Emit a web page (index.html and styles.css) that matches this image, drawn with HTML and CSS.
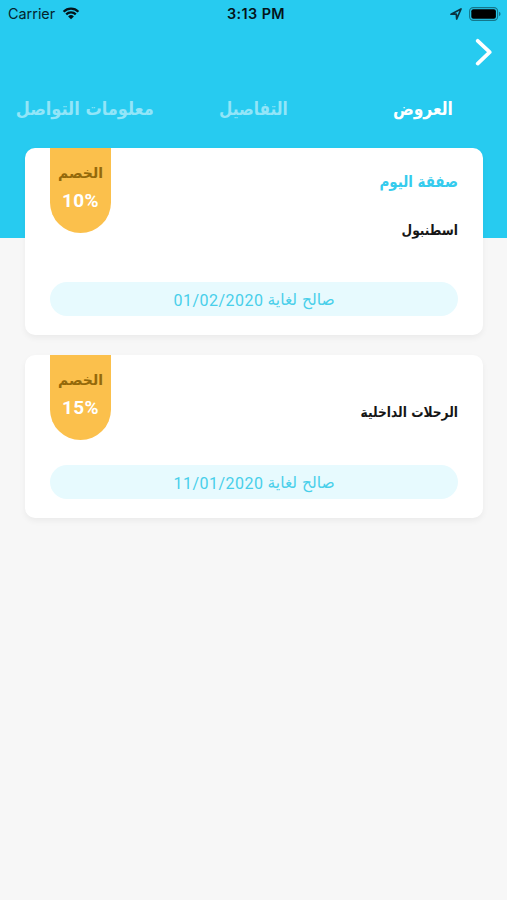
FILE: index.html
```html
<!DOCTYPE html>
<html lang="ar">
<head>
    <meta charset="UTF-8">
    <meta name="viewport" content="width=device-width, initial-scale=1.0">
    <title>العروض</title>
    <link rel="stylesheet" href="styles.css">
</head>
<body>
    <!-- Header -->
    <header class="header">
        <div class="status-bar">
            <div class="carrier">
                <span>Carrier</span>
                <svg width="18" height="13" viewBox="0 0 18 13">
                    <path d="M1.6 4.7a10.6 10.6 0 0 1 14.8 0M4.2 7.4a6.9 6.9 0 0 1 9.6 0" fill="none" stroke="#04141a" stroke-width="2.3"/>
                    <path d="M9 12.3L6.1 9.4a4.1 4.1 0 0 1 5.8 0z" fill="#04141a"/>
                </svg>
            </div>
            <div class="time">3:13 PM</div>
            <div class="indicators">
                <svg width="12" height="12" viewBox="0 0 12 12">
                    <path d="M1 6.2L11 1 6.7 11 6.3 6.2z" fill="none" stroke="#0b3340" stroke-width="1.7" stroke-linejoin="round"/>
                </svg>
                <svg width="32" height="14" viewBox="0 0 32 14">
                    <rect x=".6" y=".6" width="28" height="12.8" rx="3.6" fill="none" stroke="#14768b" stroke-width="1.1"/>
                    <rect x="2.3" y="2.3" width="24.6" height="9.4" rx="2" fill="#000"/>
                    <path d="M30 4.8q1.6.6 1.6 2.2T30 9.2z" fill="#14768b"/>
                </svg>
            </div>
        </div>
        <div class="nav">
            <svg width="18" height="28" viewBox="0 0 18 28">
                <path d="M2.7 2.8L14.7 14.2 2.7 25.6" fill="none" stroke="#fff" stroke-width="3.7" stroke-linecap="round" stroke-linejoin="round"/>
            </svg>
        </div>
        <div class="tabs" dir="rtl">
            <div class="tab active"><span class="tab-offers">العروض</span></div>
            <div class="tab"><span class="tab-details">التفاصيل</span></div>
            <div class="tab"><span class="tab-contact">معلومات التواصل</span></div>
        </div>
    </header>

    <!-- Offers -->
    <main class="offers" dir="rtl">
        <div class="card">
            <div class="card-top">
                <div class="card-text">
                    <h2>صفقة اليوم</h2>
                    <p class="city">اسطنبول</p>
                </div>
                <div class="badge">
                    <span class="badge-label">الخصم</span>
                    <span class="badge-value" dir="ltr">10%</span>
                </div>
            </div>
            <div class="valid"><span>صالح لغاية</span><bdi class="date">01/02/2020</bdi></div>
        </div>
        <div class="card">
            <div class="card-top short">
                <div class="card-text">
                    <p class="trips">الرحلات الداخلية</p>
                </div>
                <div class="badge">
                    <span class="badge-label">الخصم</span>
                    <span class="badge-value" dir="ltr">15%</span>
                </div>
            </div>
            <div class="valid"><span>صالح لغاية</span><bdi class="date">11/01/2020</bdi></div>
        </div>
    </main>
</body>
</html>
```

FILE: styles.css
```css
* {
    box-sizing: border-box;
}
body {
    margin: 0;
    min-height: 900px;
    background-color: #f7f7f7;
    font-family: "DejaVu Sans", sans-serif;
}
svg {
    display: block;
}
.header {
    height: 238px;
    background-color: #27cbf0;
}
.status-bar {
    height: 27px;
    padding: 0 6px 0 8px;
    display: grid;
    grid-template-columns: 1fr auto 1fr;
    align-items: center;
    font-family: Inter, sans-serif;
    font-size: 14.4px;
    color: #04242d;
}
.carrier,
.indicators {
    display: flex;
    align-items: center;
    gap: 7px;
}
.indicators {
    justify-content: flex-end;
}
.time {
    padding-left: 3px;
    font-weight: 600;
    letter-spacing: 0.4px;
    color: #04141a;
}
.nav {
    height: 51px;
    padding: 11px 14px 0 0;
    display: flex;
    justify-content: flex-end;
}
.tabs {
    display: grid;
    grid-template-columns: repeat(3, 1fr);
    height: 60px;
    align-items: center;
}
.tab {
    display: flex;
    justify-content: center;
    font-size: 18px;
    font-weight: bold;
    white-space: nowrap;
    color: #93e5f8;
}
.tab.active {
    color: #fff;
}
/* condensed Arabic */
.tab-offers {
    transform: scaleX(0.86);
}
.tab-details {
    transform: scaleX(0.85);
}
.tab-contact {
    transform: scaleX(0.9);
}
.offers {
    margin-top: -90px;
    padding: 0 24px 0 25px;
    display: flex;
    flex-direction: column;
    gap: 20px;
}
.card {
    padding: 0 25px 19px;
    background-color: #fff;
    border-radius: 10px;
    box-shadow: 0 3px 6px rgba(0, 0, 0, 0.05);
}
.card-top {
    height: 134px;
    display: flex;
    justify-content: space-between;
}
.card-top.short {
    height: 110px;
}
.card-text {
    flex: 1;
}
.card h2 {
    margin: 23px 0 0;
    font-size: 16px;
    line-height: 22px;
    color: #35cbed;
    transform: scaleX(0.84);
    transform-origin: right;
}
.card p {
    margin: 0;
    font-size: 14px;
    font-weight: bold;
    line-height: 22px;
    color: #161616;
    transform: scaleX(0.875);
    transform-origin: right;
}
.card .city {
    margin-top: 26px;
}
.card .trips {
    margin-top: 46px;
}
.badge {
    width: 61px;
    height: 85px;
    padding-top: 14px;
    display: flex;
    flex-direction: column;
    align-items: center;
    background-color: #fbc04c;
    border-radius: 0 0 31px 31px;
}
.badge-label {
    font-size: 14px;
    font-weight: bold;
    line-height: 22px;
    color: #94690a;
}
.badge-value {
    margin-top: 6px;
    font-family: Roboto, sans-serif;
    font-size: 19px;
    font-weight: bold;
    line-height: 22px;
    letter-spacing: 0.4px;
    color: #fff;
}
.valid {
    height: 34px;
    padding-top: 2px;
    display: flex;
    justify-content: center;
    align-items: center;
    gap: 4px;
    font-size: 15.5px;
    color: #48cfea;
    background-color: #e7fafe;
    border-radius: 17px;
}
.date {
    font-family: Roboto, sans-serif;
    font-size: 16px;
    letter-spacing: 0.5px;
}
```
